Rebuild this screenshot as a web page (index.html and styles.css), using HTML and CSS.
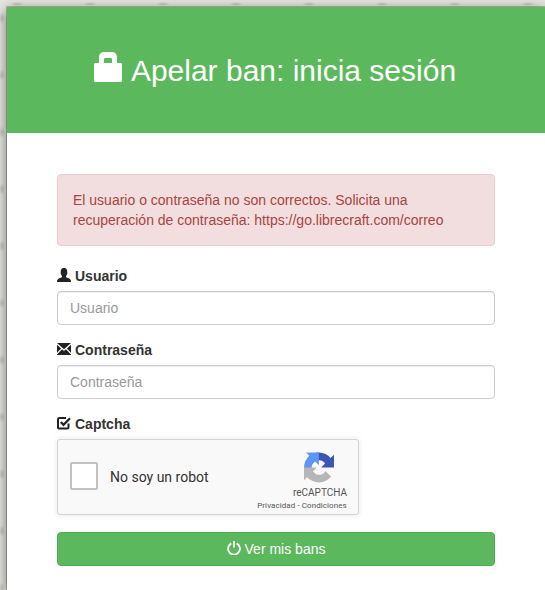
FILE: index.html
```html
<!DOCTYPE html>
<html lang="es">
<head>
<meta charset="utf-8">
<title>Apelar ban: inicia sesión</title>
<link rel="stylesheet" href="styles.css">
</head>
<body>
<main class="card">
  <header class="card-header">
    <h2 class="card-title">
      <svg class="icon-lock" viewBox="0 0 28 30" aria-hidden="true"><path fill-rule="evenodd" fill="#fff" d="M5 11V5.500C5 2 7 0 10.500 0h7C21 0 23 2 23 5.500V11h3.500c.9 0 1.500.6 1.500 1.500v16c0 .9-.6 1.500-1.500 1.500H1.500C.6 30 0 29.400 0 28.500v-16C0 11.600.6 11 1.500 11zM10 11h8V7.500c0-1-.5-1.500-1.500-1.500h-5C10.500 6 10 6.500 10 7.500z"/></svg>
      Apelar ban: inicia sesión
    </h2>
  </header>
  <div class="card-body">
    <div class="alert">El usuario o contraseña no son correctos. Solicita una recuperación de contraseña: https://go.librecraft.com/correo</div>
    <form class="form">
      <div class="field">
        <label class="label" for="usuario">
          <svg class="icon" viewBox="0 0 14 14" aria-hidden="true"><path fill="#222" d="M0 14c0-2.600 1.200-3.400 3-4 1.300-.5 2-.9 2-1.600 0-.5-.5-.9-.9-1.900-.2-.2-.5-.6-.5-1.200 0-.3.1-.5.200-.7C3.600 2.500 3.900 0 7 0s3.400 2.500 3.200 4.600c.1.200.2.400.2.700 0 .6-.3 1-.5 1.200-.4 1-.9 1.400-.9 1.900 0 .7.700 1.100 2 1.600 1.800.6 3 1.400 3 4z"/></svg>
          Usuario
        </label>
        <input class="input" id="usuario" type="text" placeholder="Usuario">
      </div>
      <div class="field">
        <label class="label" for="contrasena">
          <svg class="icon" viewBox="0 0 14 12" aria-hidden="true"><path fill="#222" d="M0 0h14l-7 6.200zM0 1.800 4.100 5.400 0 9.700zM14 1.800v7.900L9.900 5.400zM5.100 6.300 7 8 8.900 6.300 14 11.500V12H0v-.5z"/></svg>
          Contraseña
        </label>
        <input class="input" id="contrasena" type="text" placeholder="Contraseña">
      </div>
      <div class="field field-captcha">
        <span class="label">
          <svg class="icon" viewBox="0 0 14 14" aria-hidden="true"><path fill="none" stroke="#222" stroke-width="2" d="M11.500 7.500V11.200c0 .9-.5 1.400-1.400 1.400H2.400c-.9 0-1.400-.5-1.400-1.400V3.500c0-.9.500-1.400 1.400-1.400H9"/><path fill="none" stroke="#222" stroke-width="2.200" d="M3.800 6 6.500 8.800 13 2.200"/></svg>
          Captcha
        </span>
        <div class="captcha">
          <span class="captcha-box"></span>
          <span class="captcha-text">No soy un robot</span>
          <div class="captcha-brand">
            <svg class="captcha-logo" viewBox="0 0 64 64" aria-hidden="true">
              <path fill="#1c3aa9" d="M64 31.955l-.033-1.370V4.687l-7.160 7.160C50.948 4.674 42.033.093 32.050.093c-10.400 0-19.622 4.960-25.458 12.640l11.736 11.860a15.550 15.550 0 0 1 4.754-5.334c2.050-1.600 4.952-2.906 8.968-2.906.485 0 .860.057 1.135.163 4.976.393 9.288 3.140 11.828 7.124l-8.307 8.307c10.522-.040 22.400-.066 27.295.005"/>
              <path fill="#4285f4" d="M31.862.094l-1.370.033H4.594l7.160 7.160C4.580 13.147 0 22.060 0 32.046c0 10.400 4.960 19.622 12.640 25.458L24.500 45.768a15.550 15.550 0 0 1-5.334-4.754c-1.600-2.050-2.906-4.952-2.906-8.968 0-.485.057-.860.163-1.135.393-4.976 3.140-9.288 7.124-11.828l8.307 8.307c-.040-10.522-.066-22.400.005-27.295"/>
              <path fill="#ababab" d="M.001 32.045l.033 1.370v25.898l7.160-7.160c5.860 7.173 14.774 11.754 24.760 11.754 10.400 0 19.622-4.960 25.458-12.640L45.676 39.400a15.550 15.550 0 0 1-4.754 5.334c-2.050 1.600-4.952 2.906-8.968 2.906-.485 0-.860-.057-1.135-.163-4.976-.393-9.288-3.140-11.828-7.124l8.307-8.307c-10.522.040-22.400.066-27.295-.005"/>
            </svg>
            <span class="captcha-name">reCAPTCHA</span>
            <span class="captcha-links">Privacidad - Condiciones</span>
          </div>
        </div>
      </div>
      <button class="button" type="button">
        <svg class="icon-power" viewBox="0 0 14 14" aria-hidden="true"><path fill="none" stroke="#fff" stroke-width="1.800" d="M4.300 2.400a5.900 5.900 0 1 0 5.400 0"/><path fill="none" stroke="#fff" stroke-width="2" d="M7 0v6.500"/></svg>
        Ver mis bans
      </button>
    </form>
  </div>
</main>
</body>
</html>
```

FILE: styles.css
```css
* {
  box-sizing: border-box;
}

html,
body {
  height: 100%;
}

body {
  margin: 0;
  overflow: hidden;
  background-color: #e6e6e0;
  background-image:
    radial-gradient(ellipse 7px 2px at 17px 4px, rgba(150, 150, 140, 0.45), transparent),
    radial-gradient(ellipse 3px 6px at 2px 18px, rgba(150, 150, 140, 0.45), transparent);
  background-size: 73px 57px;
  font-family: "Liberation Sans", Arial, sans-serif;
  font-size: 14px;
  line-height: 20px;
  color: #333;
}

.card {
  margin: 7px 0 0 7px;
  background: #fff;
  box-shadow: 0 0 0 1px rgba(0, 0, 0, 0.2), 0 3px 12px rgba(0, 0, 0, 0.55);
  height: calc(100% - 7px);
}

.card-header {
  height: 126px;
  padding-right: 2px;
  background: #5cb85c;
  display: flex;
  align-items: center;
  justify-content: center;
}

.card-title {
  margin: 0;
  font-size: 30px;
  font-weight: 400;
  line-height: 33px;
  color: #fff;
  display: flex;
  align-items: center;
  gap: 9px;
}

.icon-lock {
  width: 28px;
  height: 30px;
  margin-top: -6px;
}

.card-body {
  padding: 41px 50px 0;
}

.alert {
  height: 72px;
  padding: 15px;
  margin-bottom: 20px;
  background: #f2dede;
  border: 1px solid #ebccd1;
  border-radius: 4px;
  color: #a94442;
}

.field {
  margin-bottom: 15px;
}

.field-captcha {
  margin-bottom: 17px;
}

.label {
  display: flex;
  align-items: center;
  gap: 4px;
  height: 20px;
  margin-bottom: 5px;
  font-weight: 700;
}

.icon {
  width: 14px;
  height: 14px;
  margin-top: -2px;
}

.input {
  display: block;
  width: 100%;
  height: 34px;
  padding: 6px 12px;
  background: #fff;
  border: 1px solid #ccc;
  border-radius: 4px;
  box-shadow: inset 0 1px 1px rgba(0, 0, 0, 0.075);
  font: inherit;
  color: #555;
}

.input::placeholder {
  color: #999;
  opacity: 1;
}

.captcha {
  display: flex;
  align-items: center;
  width: 302px;
  height: 76px;
  padding-left: 12px;
  background: #f9f9f9;
  border: 1px solid #d3d3d3;
  border-radius: 3px;
  box-shadow: 0 0 4px 1px rgba(0, 0, 0, 0.08);
}

.captcha-box {
  width: 28px;
  height: 28px;
  margin-top: -2px;
  background: #fff;
  border: 2px solid #c1c1c1;
  border-radius: 2px;
}

.captcha-text {
  margin-left: 12px;
  font-family: Roboto, sans-serif;
  font-size: 14px;
  color: #333;
}

.captcha-brand {
  display: flex;
  flex-direction: column;
  align-items: center;
  margin-left: auto;
  margin-right: 11px;
  width: 90px;
  padding-top: 8px;
  font-family: Roboto, sans-serif;
}

.captcha-logo {
  width: 30px;
  height: 31px;
  margin-left: 34px;
  opacity: 0.85;
}

.captcha-name {
  margin-left: 36px;
  font-size: 10px;
  line-height: 14px;
  margin-top: 3px;
  color: #555;
}

.captcha-links {
  font-size: 8px;
  line-height: 10px;
  letter-spacing: 0.08px;
  margin-top: 1px;
  color: #555;
  white-space: nowrap;
}

.button {
  display: flex;
  align-items: center;
  justify-content: center;
  gap: 4px;
  width: 100%;
  height: 34px;
  background: #5cb85c;
  border: 1px solid #4cae4c;
  border-radius: 4px;
  font: inherit;
  color: #fff;
}

.icon-power {
  width: 14px;
  height: 14px;
  margin-top: -2px;
}
```
